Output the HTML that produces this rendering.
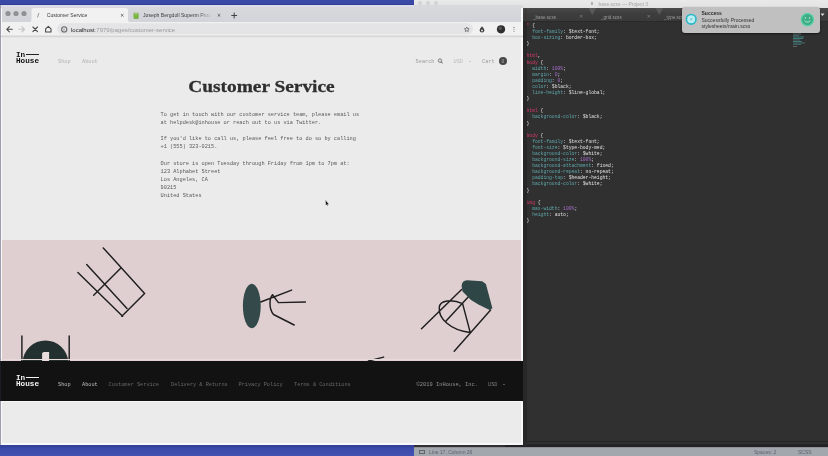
<!DOCTYPE html>
<html><head><meta charset="utf-8">
<style>
*{box-sizing:border-box}
html,body{margin:0;padding:0}
body{width:828px;height:456px;overflow:hidden;position:relative;background:linear-gradient(#3a49a6,#3a49a6 444px,#33409a 446px,#3c4baa 449px,#4352b2);font-family:"Liberation Sans",sans-serif}
.a{position:absolute}
.m{font-family:"Liberation Mono",monospace;white-space:pre}
.s{font-family:"Liberation Sans",sans-serif;white-space:pre}
/* editor window */
#ed-title{left:414px;top:0;width:414px;height:8px;background:linear-gradient(#e9e9e9,#e2e2e2)}
#ed{left:414px;top:8px;width:414px;height:439px;background:#303030}
#ed-tabs{left:523px;top:8px;width:305px;height:14px;background:linear-gradient(#4a4a4a,#3e3e3e 40%,#3a3a3a);border-bottom:1px solid #2a2a2a}
#ed-status{left:414px;top:446.5px;width:414px;height:9.5px;background:#a2a6ad;border-top:0.8px solid #8e9196}
#code{left:526.5px;top:23px;font-size:4.7px;line-height:6.09px;color:#e0e0e0}
#code .p{color:#5fa8ac}
#code .k{color:#d9386a}
#code .n{color:#a46cc8}
/* browser */
#br{left:1px;top:5px;width:522px;height:440px;background:linear-gradient(#d7d9dd,#d2d4d9 16px,#d2d4d9);border-radius:2px 2px 0 0;overflow:hidden}
#page{left:0;top:32px;width:522px;height:408px;background:#ebebeb;overflow:hidden}
#toolbar{left:0;top:17px;width:521px;height:15px;background:#f1f1f1;border-bottom:1px solid #d4d4d4}
.dot{width:5px;height:5px;border-radius:50%;background:#8e9095;top:6px}
#tab1{left:30px;top:3px;width:97px;height:14px;background:#f1f1f1;border-radius:3px 3px 0 0}
#url{left:56px;top:2px;width:416px;height:12px;background:#e5e5e7;border-radius:6px}
.txt{color:#333;font-size:5.25px}
.logo{font-family:"Liberation Mono",monospace;font-weight:bold;font-size:7.7px;line-height:8px;white-space:pre;color:#111}
#pink{left:0;top:202.8px;width:521px;height:121px;background:#e0cfd1}
#foot{left:0;top:323.5px;width:522px;height:40.1px;background:#121212}
.wrap{position:absolute;left:0;top:0;width:828px;height:456px;background:inherit;filter:blur(0.3px)}</style></head>
<body><div class="wrap">
<div class="a" id="ed-title"></div>
<div class="a" style="left:590.5px;top:1.8px;width:2.6px;height:3.4px;border:0.6px solid #b0b0b0"></div><div class="a s" style="left:598.4px;top:1.3px;font-size:5px;color:#a6a6a6">base.scss — Project 3</div>
<div class="a dot" style="left:417.5px;top:1px;width:4px;height:4px;background:#d2d2d2"></div>
<div class="a dot" style="left:426px;top:1px;width:4px;height:4px;background:#d2d2d2"></div>
<div class="a dot" style="left:433.5px;top:1px;width:4px;height:4px;background:#d2d2d2"></div>
<div class="a" id="ed"></div>
<div class="a" id="ed-tabs"></div>
<div class="a s" style="left:533px;top:14.8px;font-size:4.6px;color:#9c9c9c">_base.scss</div>
<svg class="a" style="left:523px;top:8px" width="305" height="14" viewBox="523 8 305 14">
<path d="M588.5,8L596,8L592.3,15Z" fill="#5a5a5a"/><path d="M655.5,8L663,8L659.3,15Z" fill="#5a5a5a"/>
<path d="M580,15L582.5,17.5M582.5,15L580,17.5M647.5,15L650,17.5M650,15L647.5,17.5" stroke="#888" stroke-width="0.6"/>
<path d="M526,9V22" stroke="#3a3030" stroke-width="1"/><path d="M820.5,13.5L824.5,13.5L822.5,16Z" fill="#ddd"/>
</svg>
<div class="a s" style="left:601px;top:14.8px;font-size:4.6px;color:#9c9c9c">_grid.scss</div>
<div class="a s" style="left:664px;top:14.8px;font-size:4.6px;color:#9c9c9c">_type.scss</div>
<div class="a" style="left:523px;top:441px;width:305px;height:0.6px;background:#242424"></div><div class="a" style="left:523px;top:443.5px;width:305px;height:0.6px;background:#242424"></div><div class="a" style="left:505px;top:445px;width:323px;height:1.5px;background:#222"></div>
<div class="a" id="ed-status"></div>
<div class="a" style="left:419px;top:449.6px;width:5.5px;height:4px;border:0.8px solid #62666c;border-top-width:1.5px"></div>
<div class="a s" style="left:429px;top:449px;font-size:5px;color:#5e626a">Line 17, Column 26</div>
<div class="a s" style="left:754px;top:449px;font-size:5px;color:#5e626a">Spaces: 2</div>
<div class="a s" style="left:798px;top:449px;font-size:5px;color:#5e626a">SCSS</div>

<div class="a m" id="code"><span class="k">*</span> {
  <span class="p">font-family</span>: $text-font;
  <span class="p">box-sizing</span>: border-box;
}

<span class="k">html</span>,
<span class="k">body</span> {
  <span class="p">width</span>: <span class="n">100%</span>;
  <span class="p">margin</span>: <span class="n">0</span>;
  <span class="p">padding</span>: <span class="n">0</span>;
  <span class="p">color</span>: $black;
  <span class="p">line-height</span>: $line-global;
}

<span class="k">html</span> {
  <span class="p">background-color</span>: $black;
}

<span class="k">body</span> {
  <span class="p">font-family</span>: $text-font;
  <span class="p">font-size</span>: $type-body-med;
  <span class="p">background-color</span>: $white;
  <span class="p">background-size</span>: <span class="n">100%</span>;
  <span class="p">background-attachment</span>: fixed;
  <span class="p">background-repeat</span>: no-repeat;
  <span class="p">padding-top</span>: $header-height;
  <span class="p">background-color</span>: $white;
}

<span class="k">img</span> {
  <span class="p">max-width</span>: <span class="n">100%</span>;
  <span class="p">height</span>: auto;
}</div>

<div class="a" id="br">
  <div class="a" id="toolbar"></div>
  <div class="a" id="page">
    <div class="a logo" style="left:15px;top:13.6px">In</div><div class="a" style="left:25.3px;top:16.8px;width:12.7px;height:0.8px;background:#222"></div><div class="a logo" style="left:15px;top:20px">House</div>
    <div class="a m txt" style="left:57px;top:21.6px;color:#b2b2b2">Shop</div>
    <div class="a m txt" style="left:81px;top:21.6px;color:#b2b2b2">About</div>
    <div class="a m txt" style="left:414.6px;top:22.2px;color:#9a9a9a">Search</div>
    <div class="a m txt" style="left:452.5px;top:22.2px;color:#bdbdbd">USD</div>
    <div class="a m txt" style="left:481px;top:22.2px;color:#9a9a9a">Cart</div>
    <div class="a" style="left:497.8px;top:20px;width:8px;height:8px;background:#474747;border-radius:50%"></div>
    <div class="a m" style="left:500.4px;top:21.5px;font-size:4.5px;color:#aaa">0</div>
    <svg class="a" style="left:434px;top:19px" width="10" height="10" viewBox="0 0 10 10"><circle cx="5" cy="4.6" r="1.7" stroke="#777" stroke-width="1" fill="none"/><path d="M6.2,5.8L7.3,7" stroke="#777" stroke-width="1.1" stroke-linecap="round"/></svg>
    <div class="a" style="left:467.5px;top:24.3px;width:0;height:0;border-left:1.6px solid transparent;border-right:1.6px solid transparent;border-top:1.9px solid #aaa"></div>
    <div class="a" style="left:150px;top:39px;width:221px;text-align:center;font-family:'Liberation Serif',serif;font-weight:bold;font-size:17.6px;transform:scaleX(1.1);color:#2e2e2e;-webkit-text-stroke:0.3px #2e2e2e;white-space:nowrap">Customer Service</div>
    <div class="a m txt" style="left:159.6px;top:74.3px;line-height:8.05px;color:#585858">To get in touch with our customer service team, please email us
at helpdesk@inhouse or reach out to us via Twitter.

If you'd like to call us, please feel free to do so by calling
+1 (555) 323-0215.

Our store is open Tuesday through Friday from 1pm to 7pm at:
123 Alphabet Street
Los Angeles, CA
90215
United States</div>
    <div id="pink" class="a"><svg class="a" style="left:0;top:0" width="521" height="121" viewBox="1 240 521 121">
<g stroke="#1f1f1f" stroke-width="1.45" fill="none" stroke-linecap="round" stroke-linejoin="round">
<path d="M103.3,247.9L144.6,293.5L121.8,316.3M86.7,264.6L127,308.4M77.9,272.5L122.6,316.3M120.9,268L93.7,295.3"/>
<path d="M260.7,302L291.6,290.1M305.4,302L278.4,302.6L272.5,294.7C269.5,298 268.5,308 273.5,314.5L294.2,325"/>
<path d="M461.6,289.6L421.5,328.8M468.2,297L445.8,321.3M490.6,310.1L454.2,351.2M462.6,303.6L470,331.6M470,332.5C450,330 438,318 439.3,307.3C440,300 452,299 462.6,303.6"/>
<path d="M21.9,336V362M69.2,336V362M368.4,361L383.6,357.1"/>
</g>
<ellipse cx="251.8" cy="306" rx="8.9" ry="22.3" fill="#34494a"/>
<path d="M467,280.3L482.2,281.2L485.9,284L492.4,308.2L489.6,310.1L478.4,304.5L471,299.9L462.6,291.5L461.6,285.9Q462,280.5 467,280.3Z" fill="#2f4646"/>
<path d="M22.5,362A23,23 0 0 1 68.4,362Z" fill="#22302f"/>
<path d="M42.1,362V353.5Q42.5,352 44,352H49.1V362Z" fill="#e8dcdc"/>
</svg></div>
    <div id="foot" class="a">
      <div class="a logo" style="left:15px;top:13.1px;color:#f2f2f2">In</div><div class="a" style="left:24.8px;top:16.1px;width:13px;height:0.9px;background:#f2f2f2"></div><div class="a logo" style="left:15px;top:19.5px;color:#f2f2f2">House</div>
      <div class="a m txt" style="left:57px;top:21px;color:#bdbdbd">Shop</div>
      <div class="a m txt" style="left:81px;top:21px;color:#bdbdbd">About</div>
      <div class="a m txt" style="left:107.6px;top:21px;color:#686868">Customer Service</div>
      <div class="a m txt" style="left:170px;top:21px;color:#686868">Delivery &amp; Returns</div>
      <div class="a m txt" style="left:237.5px;top:21px;color:#686868">Privacy Policy</div>
      <div class="a m txt" style="left:293px;top:21px;color:#686868">Terms &amp; Conditions</div>
      <div class="a m txt" style="left:415.6px;top:21px;color:#909090;font-size:5.4px">©2019 InHouse, Inc.</div>
      <div class="a m txt" style="left:487px;top:21px;color:#7c7c7c">USD</div>
      <div class="a" style="left:502px;top:23.5px;width:0;height:0;border-left:1.5px solid transparent;border-right:1.5px solid transparent;border-top:1.8px solid #999"></div>
    </div>
  </div>
</div>

<div class="a" style="left:0;top:5px;width:1px;height:440px;background:#9d9dac"></div>
<div class="a" style="left:0;top:360.5px;width:1px;height:40.1px;background:#1c1c28"></div>
<div class="a" style="left:1px;top:8px;width:1px;height:352.5px;background:#f9f9fc"></div>
<div class="a" style="left:1px;top:400.6px;width:1px;height:44.4px;background:#f9f9fc"></div>
<div class="a" style="left:521px;top:8px;width:2px;height:352.5px;background:#fafafa"></div>
<div class="a" style="left:521px;top:400.6px;width:2px;height:44.4px;background:#fafafa"></div>
<div class="a" style="left:1px;top:400.6px;width:522px;height:1.4px;background:#f6f6f6"></div>
<div class="a" style="left:1px;top:359.4px;width:520px;height:1.1px;background:#e6dadb"></div>
<div class="a" style="left:523px;top:22px;width:3.5px;height:424px;background:#282828"></div>
<div class="a" style="left:1px;top:443.2px;width:522px;height:1.8px;background:#f8f8fb"></div>
<div class="a" style="left:0;top:4px;width:414px;height:1px;background:#323e92"></div>
<div class="a" style="left:1px;top:5px;width:413px;height:1.5px;background:#dadcec"></div>
<!-- browser chrome overlay (screen coords) -->
<svg class="a" style="left:0;top:0" width="523" height="38" viewBox="0 0 523 38">
<circle cx="8" cy="13.5" r="2.6" fill="#8f9196"/><circle cx="16" cy="13.5" r="2.6" fill="#8f9196"/><circle cx="24" cy="13.5" r="2.6" fill="#8f9196"/>
<path d="M30,22Q31.5,21.5 31.5,19.5V10.5Q31.5,8 34,8H125.5Q128,8 128,10.5V19.5Q128,21.5 129.5,22Z" fill="#f1f1f1"/>

<path d="M37.6,17L38.8,13.4" stroke="#8a8a8a" stroke-width="0.9" stroke-linecap="round"/>
<path d="M120.9,14L123.5,16.6M123.5,14L120.9,16.6" stroke="#555" stroke-width="0.8"/>
<rect x="133.5" y="12.8" width="5.2" height="6.2" rx="1" fill="#7cb342"/>
<path d="M135,14.3Q136,13 137.4,14.3" stroke="#fff" stroke-width="0.5" fill="none"/>
<path d="M217.7,14L220.3,16.6M220.3,14L217.7,16.6" stroke="#555" stroke-width="0.8"/>
<path d="M234.2,12.6V18.4M231.3,15.5H237.1" stroke="#333" stroke-width="0.9"/>
<g stroke="#4a4a4a" stroke-width="1.1" fill="none" stroke-linecap="round" stroke-linejoin="round">
<path d="M12.3,29.3H6.8M9.4,26.7L6.8,29.3L9.4,31.9"/>
<path d="M34.9,27L39.5,31.6M39.5,27L34.9,31.6" transform="translate(-2,0)"/>
<path d="M45.6,28.8L48.3,26.3L51,28.8V32H45.6Z"/>
</g>
<g stroke="#c2c2c2" stroke-width="1.1" fill="none" stroke-linecap="round" stroke-linejoin="round">
<path d="M19,29.3H24.5M21.9,26.7L24.5,29.3L21.9,31.9"/>
</g>
<rect x="57" y="23.3" width="416" height="11" rx="5.5" fill="#e4e4e6"/>
<circle cx="64.2" cy="29.4" r="2.6" stroke="#6a6a6a" stroke-width="1.1" fill="none"/>
<path d="M64,28.6V30.6" stroke="#6a6a6a" stroke-width="0.7"/><circle cx="64" cy="27.6" r="0.35" fill="#6a6a6a"/>
<path d="M466.8,27L467.5,28.6L469.2,28.8L467.9,29.9L468.3,31.6L466.8,30.7L465.3,31.6L465.7,29.9L464.4,28.8L466.1,28.6Z" stroke="#666" stroke-width="0.8" fill="none" stroke-linejoin="round"/>
<path d="M482,26.3Q484.3,29 484.3,30.3A2.3,2.3 0 0 1 479.7,30.3Q479.7,29 482,26.3Z" fill="#3c3c3c"/>
<circle cx="482" cy="30.5" r="0.9" fill="#eee"/>
<circle cx="501" cy="29.3" r="4.1" fill="#2f2f2f"/><circle cx="500.2" cy="28.3" r="1.8" fill="#555"/>
<circle cx="514" cy="27.4" r="0.55" fill="#777"/><circle cx="514" cy="29.3" r="0.55" fill="#777"/><circle cx="514" cy="31.2" r="0.55" fill="#777"/>
<path d="M1,36.4H523" stroke="#d6d6d6" stroke-width="1.6"/>
</svg>
<div class="a s" style="left:46.8px;top:12.4px;font-size:5.1px;color:#3a3a3a">Customer Service</div>
<div class="a s" style="left:143px;top:12.4px;font-size:5.1px;color:#3c3c3c;width:69px;overflow:hidden;-webkit-mask-image:linear-gradient(90deg,#000 80%,transparent)">Joseph Bergdoll Superm Product</div>
<div class="a s" style="left:71px;top:26.8px;font-size:6px;color:#2a2a2a">localhost<span style="color:#9a9a9a">:7979/pages/customer-service</span></div>
<svg class="a" style="left:322px;top:197px" width="10" height="12" viewBox="322 197 10 12"><path d="M325.3,199.6L329.2,204.6L327.6,204.5L328.3,206L327.5,206.3L326.8,204.8L325.6,205.6Z" fill="#111" stroke="#fff" stroke-width="0.5" stroke-linejoin="round"/></svg>
<!-- notification -->
<div class="a" style="left:682px;top:7px;width:137.5px;height:25.5px;background:#c0c0c0;border-radius:3px;box-shadow:0 1px 2px rgba(0,0,0,.5)"></div>
<svg class="a" style="left:682px;top:7px" width="138" height="26" viewBox="682 7 138 26">
<circle cx="691.2" cy="19.3" r="4.8" fill="#b8f0f2" stroke="#28b5c8" stroke-width="1.6"/>
<circle cx="691.2" cy="19.3" r="1.2" fill="#8fc8d0"/>
<circle cx="807.4" cy="19.6" r="6.2" fill="#3eae86" stroke="#5ed3a8" stroke-width="1.2"/>
<circle cx="805.3" cy="18" r="0.7" fill="#c8f0e0"/><circle cx="809.5" cy="18" r="0.7" fill="#c8f0e0"/>
<path d="M804.4,20.6Q807.4,23.8 810.4,20.6" stroke="#c8f0e0" stroke-width="0.8" fill="none"/>
</svg>
<div class="a s" style="left:701.5px;top:10.8px;font-size:5px;line-height:5.5px;font-weight:bold;color:#2a2a2a">Success</div>
<div class="a s" style="left:701.5px;top:17px;font-size:5px;line-height:6.2px;color:#333">Successfully Processed
stylesheets/main.scss</div>
<svg class="a" style="left:790px;top:33px" width="20" height="16" viewBox="790 33 20 16">
<g stroke-width="0.8">
<path d="M793,34H801" stroke="#5a7a7a"/><path d="M793,35.5H799" stroke="#4a6a6a"/>
<path d="M793,37H804" stroke="#3f8f90"/><path d="M793,38.5H803" stroke="#3f8f90"/>
<path d="M793,40H800" stroke="#607070"/><path d="M793,41.5H802" stroke="#3f8f90"/>
<path d="M793,43H805" stroke="#4a8080"/><path d="M793,44.5H801" stroke="#4a7070"/>
<path d="M793,46.5H797" stroke="#707070"/>
</g></svg>
</div></body></html>
